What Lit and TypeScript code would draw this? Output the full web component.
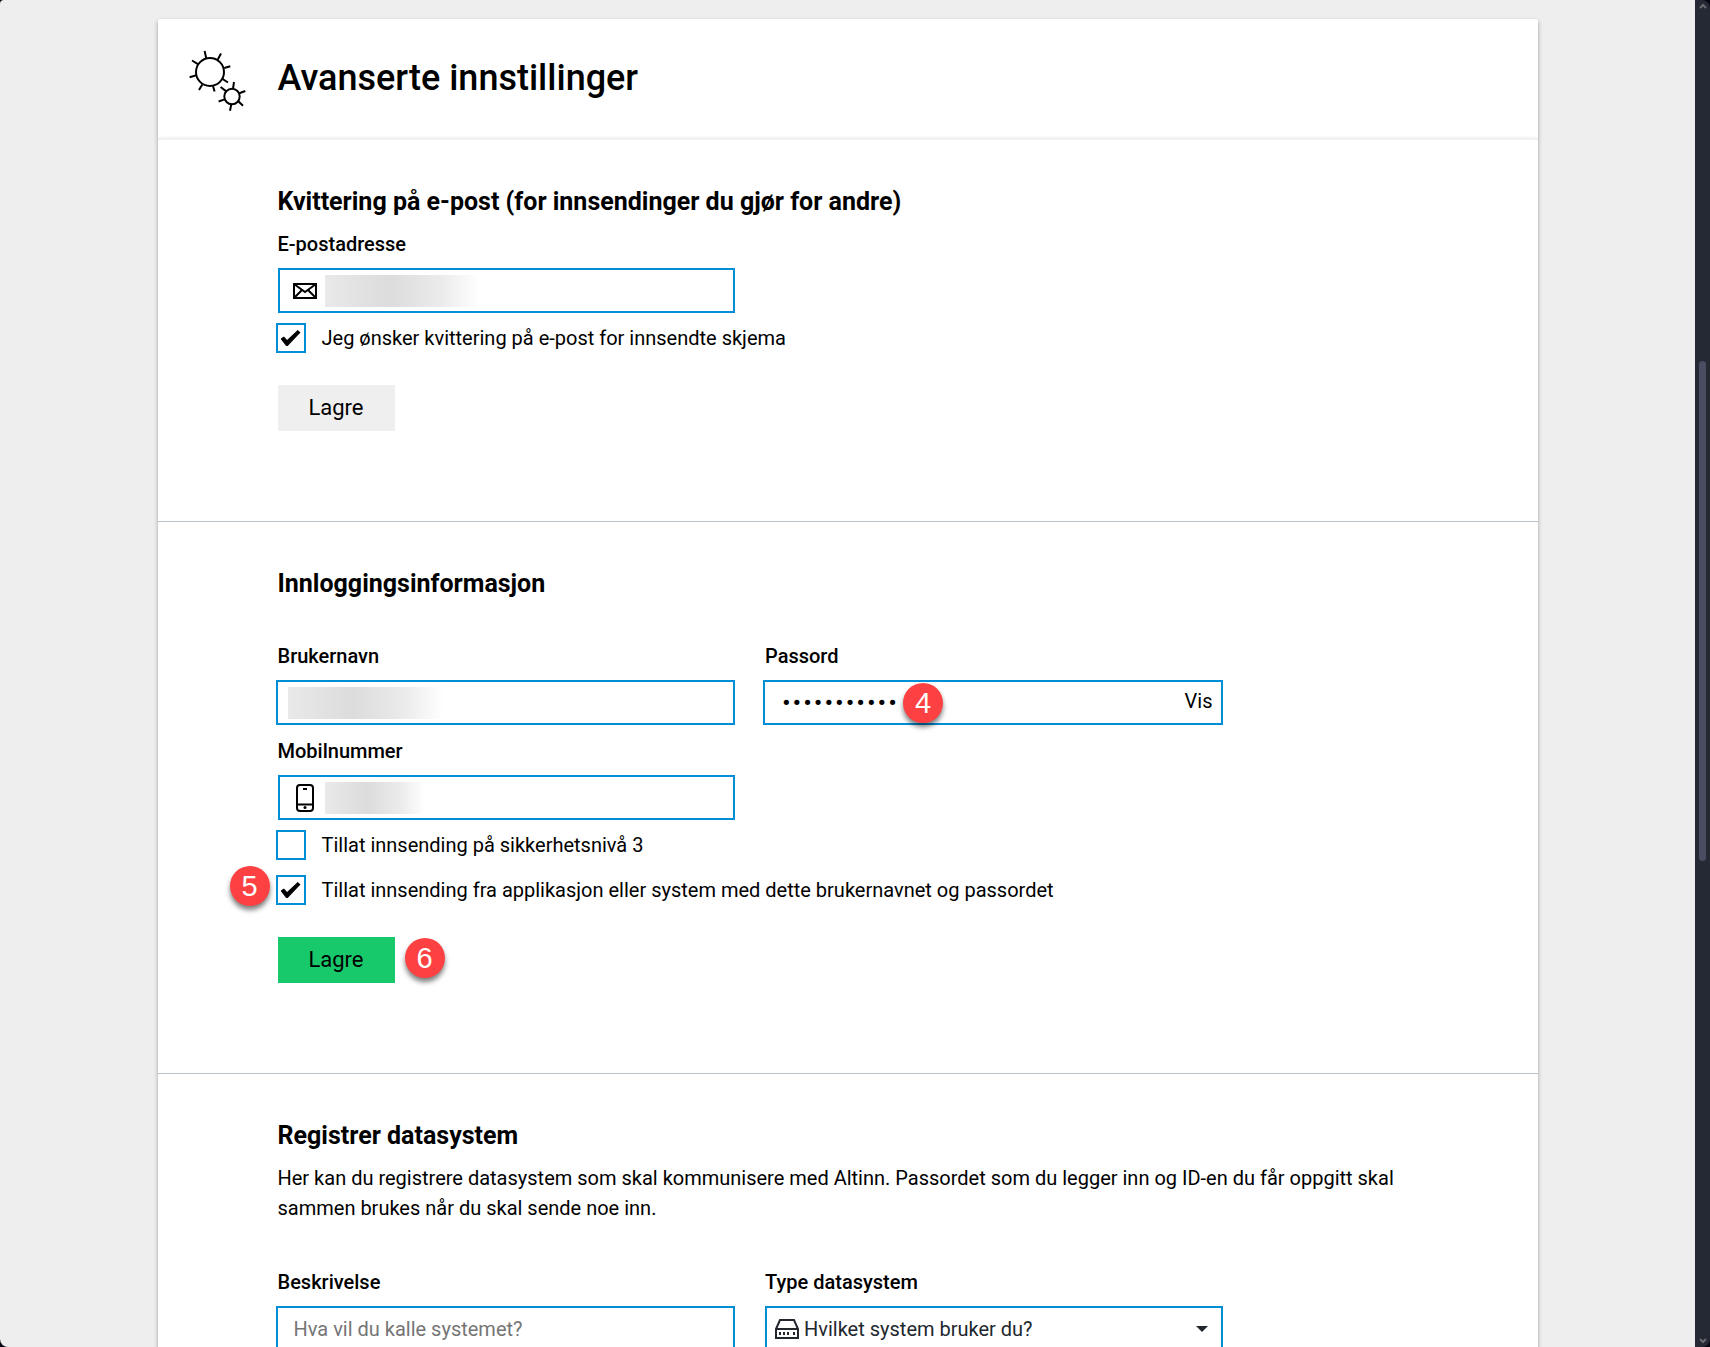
import { LitElement, html, css, svg } from "lit";
import { customElement, property } from "lit/decorators.js";

const envelope = svg`<svg class="icon" viewBox="0 0 26 18" width="26" height="18" fill="none" stroke="#000" stroke-width="2" aria-hidden="true">
  <path d="M2 2h22v14H2zM2 2l11 8 11-8M2 16l8-8M24 16l-8-8" /></svg>`;

const phone = svg`<svg class="icon" viewBox="0 0 26 30" width="26" height="30" fill="none" stroke="#000" stroke-width="2" aria-hidden="true">
  <rect x="5" y="2" width="16" height="26" rx="3" /><path d="M5 21.500h16M11 6h4" /><circle cx="13" cy="24.500" r="1.500" fill="#000" stroke="none" /></svg>`;

const drive = svg`<svg class="icon" viewBox="0 0 26 22" width="26" height="22" fill="none" stroke="#22272e" stroke-width="2" aria-hidden="true">
  <path d="M2 11L6 2h14l4 9v9H2zM2 11h22" /><path d="M5 15.500h2M9 15.500h2M13 15.500h2M19 15.500h2" stroke-width="3" /></svg>`;

const gears = svg`<svg class="gears" viewBox="0 0 58 62" width="58" height="62" fill="none" stroke="#000" stroke-width="2" aria-hidden="true">
  <circle cx="21" cy="22" r="14" /><circle cx="43" cy="46.500" r="7.700" />
  <path d="M17.300 8.500L15.600 1M28.500 10L32 3.500M35.300 18L41.300 16.200M33.600 29L39 32.500M24 36L25.600 41.500M13.300 34.400L10 40M7.400 25.300L0.600 27.300M9.300 14.300L3 10.500" />
  <path d="M44 38.800L45 32M50.300 43.200L56.300 41M49 51L54 55.700M42.300 54.200L41 60.800M35.600 49.400L29.600 51.500M37.600 41.600L31.600 37" /></svg>`;

@customElement("step-badge")
export class StepBadge extends LitElement {
  @property() step = "";

  static styles = css`
    :host {
      position: absolute;
      display: block;
      width: 40px;
      height: 40px;
      border-radius: 50%;
      background: #fd4143;
      box-shadow: 0 4px 5px rgba(0, 0, 0, 0.5);
      color: #fff;
      font: 29px/40px "Liberation Sans", Arial, sans-serif;
      text-align: center;
    }
  `;

  render() {
    return html`${this.step}`;
  }
}

@customElement("app-root")
export class AppRoot extends LitElement {
  static styles = css`
    :host {
      display: flex;
      height: 100vh;
      overflow: hidden;
      background: #05060f;
      color: #000;
      font: 20px/30px "Roboto", "Liberation Sans", sans-serif;
    }
    * {
      box-sizing: border-box;
    }
    .page {
      flex: 1;
      min-width: 0;
      overflow: hidden;
      padding-top: 19px;
      background: #eee;
      border-radius: 4px 0 0 8px;
    }
    .sheet {
      max-width: 1380px;
      margin: 0 auto;
    }
    .head,
    .body {
      background: #fff;
      box-shadow: 0 2px 4px rgba(0, 0, 0, 0.35);
    }
    .head {
      display: flex;
      align-items: center;
      height: 119px;
      padding-left: 31px;
      border-radius: 2px 2px 0 0;
    }
    .body {
      border-top: 2px solid #f0f0f0;
    }
    .gears {
      flex: none;
      width: 58px;
      margin: 4px 31px 0 0;
    }
    h1 {
      margin: 0 0 2px;
      font-size: 36px;
      line-height: 44px;
      font-weight: 500;
    }
    .section {
      padding: 45px 120px 90px;
      border-bottom: 1px solid #bcc3c9;
    }
    h2 {
      margin: 0;
      font-size: 25px;
      line-height: 34px;
      font-weight: 700;
    }
    .grid {
      display: grid;
      grid-template-columns: repeat(12, minmax(0, 1fr));
      column-gap: 30px;
    }
    .field {
      position: relative;
      grid-column: span 5;
    }
    .start {
      grid-column: 1 / span 5;
    }
    .spaced {
      margin-top: 30px;
    }
    .name {
      display: block;
      padding: 15px 0 14px;
      line-height: 20px;
      font-weight: 500;
    }
    .start .name {
      padding-top: 16px;
    }
    .box {
      display: flex;
      align-items: center;
      height: 45px;
      padding: 0 8px 0 12px;
      border: 2px solid #008fd6;
      background: #fff;
    }
    .wide {
      margin-left: -2px;
      padding-left: 10px;
    }
    .icon {
      flex: none;
    }
    .input {
      flex: 1;
      min-width: 0;
      height: 32px;
      padding: 0 6px;
      border: 0;
      outline: 0;
      background: none;
      color: #000;
      font: inherit;
    }
    .input::placeholder {
      color: #757575;
    }
    .secret {
      font: 18px/32px "DejaVu Sans", sans-serif;
    }
    .mask {
      flex: none;
      height: 32px;
      margin-left: 7px;
      background: linear-gradient(90deg, #e9e9e9, #dcdcdc 42%, #ebebeb 75%, #fff);
    }
    .wide .mask {
      margin-left: 0;
    }
    .long {
      width: 155px;
    }
    .short {
      width: 100px;
    }
    .show,
    .save {
      border: 0;
      color: #000;
      font: inherit;
      cursor: pointer;
    }
    .show {
      padding: 0 0 4px;
      background: none;
    }
    .check {
      display: flex;
      align-items: center;
      gap: 16px;
      width: max-content;
      margin: 10px 0 0 -2px;
    }
    .anchor {
      position: relative;
      margin-top: 15px;
    }
    .tick {
      display: grid;
      place-items: center;
      width: 30px;
      height: 30px;
      margin: 0;
      appearance: none;
      border: 2px solid #008fd6;
      background: #fff;
    }
    .tick:checked::before {
      content: "";
      width: 20px;
      height: 16px;
      background: #000;
      clip-path: polygon(0 55%, 17% 40%, 33% 62%, 86% 0, 100% 16%, 36% 100%, 28% 100%);
    }
    .actions {
      position: relative;
      display: flex;
      margin-top: 32px;
    }
    .save {
      width: 117px;
      height: 46px;
      background: #efefef;
      font-size: 22px;
    }
    .primary {
      background: #17c96b;
    }
    .at-field {
      top: 52px;
      left: 138px;
    }
    .at-check {
      top: -9px;
      left: -48px;
    }
    .at-save {
      top: 1px;
      left: 127px;
    }
    .lead {
      margin: 10px 0 34px;
    }
    .select {
      flex: 1;
      min-width: 0;
      height: 32px;
      padding: 0 4px;
      appearance: none;
      border: 0;
      background: none;
      color: #22272e;
      font: inherit;
    }
    .device {
      padding-left: 7px;
    }
    .caret {
      border: 6px solid transparent;
      border-top-color: #22272e;
      border-bottom: 0;
      margin-right: 5px;
    }
    .bar {
      display: flex;
      flex-direction: column;
      align-items: center;
      width: 15px;
      padding: 3px 0;
      background: #252933;
      border-radius: 0 8px 8px 0;
    }
    .thumb {
      width: 7px;
      height: 500px;
      margin: 351px 0 auto;
      border-radius: 4px;
      background: #4a4c62;
    }
  `;

  render() {
    return html`
      <main class="page">
        <div class="sheet">
          <header class="head">
            ${gears}
            <h1>Avanserte innstillinger</h1>
          </header>
          <div class="body">
            <section class="section">
              <h2>Kvittering på e-post (for innsendinger du gjør for andre)</h2>
              <div class="grid">
                <div class="field">
                  <label class="name" for="email">E-postadresse</label>
                  <div class="box">
                    ${envelope}<span class="mask long"></span>
                    <input class="input" id="email" type="email" />
                  </div>
                </div>
              </div>
              <label class="check"><input class="tick" type="checkbox" checked />Jeg ønsker kvittering på e-post for innsendte skjema</label>
              <div class="actions"><button class="save" type="button">Lagre</button></div>
            </section>

            <section class="section">
              <h2>Innloggingsinformasjon</h2>
              <div class="grid spaced">
                <div class="field">
                  <label class="name" for="user">Brukernavn</label>
                  <div class="box wide">
                    <span class="mask long"></span>
                    <input class="input" id="user" type="text" />
                  </div>
                </div>
                <div class="field">
                  <label class="name" for="password">Passord</label>
                  <div class="box wide">
                    <input class="input secret" id="password" type="password" value="passord1234" />
                    <button class="show" type="button">Vis</button>
                  </div>
                  <step-badge class="at-field" step="4"></step-badge>
                </div>
                <div class="field start">
                  <label class="name" for="mobile">Mobilnummer</label>
                  <div class="box">
                    ${phone}<span class="mask short"></span>
                    <input class="input" id="mobile" type="tel" />
                  </div>
                </div>
              </div>
              <label class="check"><input class="tick" type="checkbox" />Tillat innsending på sikkerhetsnivå 3</label>
              <div class="anchor">
                <label class="check"><input class="tick" type="checkbox" checked />Tillat innsending fra applikasjon eller system med dette brukernavnet og passordet</label>
                <step-badge class="at-check" step="5"></step-badge>
              </div>
              <div class="actions">
                <button class="save primary" type="button">Lagre</button>
                <step-badge class="at-save" step="6"></step-badge>
              </div>
            </section>

            <section class="section">
              <h2>Registrer datasystem</h2>
              <p class="lead">
                Her kan du registrere datasystem som skal kommunisere med Altinn. Passordet som du legger inn og ID-en du får oppgitt skal sammen brukes når du skal sende noe inn.
              </p>
              <div class="grid spaced">
                <div class="field">
                  <label class="name" for="description">Beskrivelse</label>
                  <div class="box wide">
                    <input class="input" id="description" type="text" placeholder="Hva vil du kalle systemet?" />
                  </div>
                </div>
                <div class="field">
                  <label class="name" for="system">Type datasystem</label>
                  <div class="box device">
                    ${drive}
                    <select class="select" id="system"><option>Hvilket system bruker du?</option></select>
                    <span class="caret"></span>
                  </div>
                </div>
              </div>
            </section>
          </div>
        </div>
      </main>
      <div class="bar" aria-hidden="true">
        <svg viewBox="0 0 8 7" width="8" height="7" fill="none" stroke="#6b6c70" stroke-width="2"><path d="M1 5l3-3 3 3" /></svg>
        <div class="thumb"></div>
        <svg viewBox="0 0 8 7" width="8" height="7" fill="none" stroke="#6b6c70" stroke-width="2"><path d="M1 2l3 3 3-3" /></svg>
      </div>
    `;
  }
}
